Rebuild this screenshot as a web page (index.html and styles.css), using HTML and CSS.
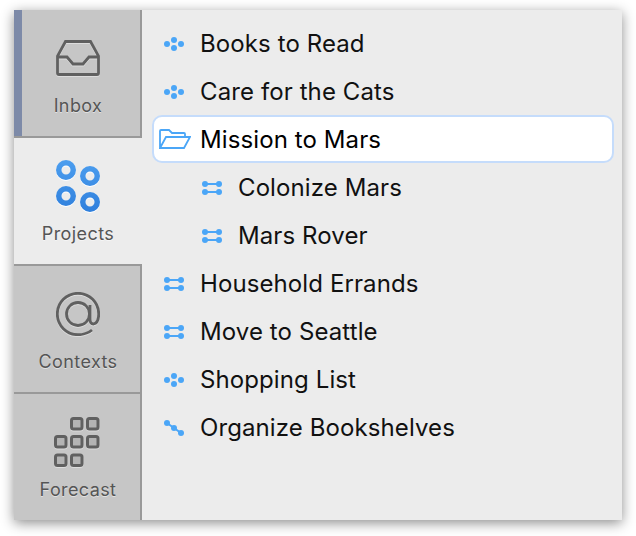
FILE: index.html
```html
<!DOCTYPE html>
<html lang="en">
<head>
    <meta charset="UTF-8">
    <title>Projects</title>
    <link rel="stylesheet" href="styles.css">
</head>
<body>
    <svg class="defs" width="0" height="0">
        <symbol id="parallel" viewBox="0 0 20 16">
            <path d="M3 4H17M3 12H17" stroke="#4ba6f7" stroke-width="2"/>
            <circle cx="3" cy="4" r="3"/><circle cx="17" cy="4" r="3"/>
            <circle cx="3" cy="12" r="3"/><circle cx="17" cy="12" r="3"/>
        </symbol>
        <symbol id="single" viewBox="0 0 20 16">
            <circle cx="3" cy="8" r="3"/><circle cx="10" cy="4" r="3"/>
            <circle cx="10" cy="12" r="3"/><circle cx="17" cy="8" r="3"/>
        </symbol>
        <symbol id="sequential" viewBox="0 0 20 16">
            <path d="M3 3L10 8L17 13" stroke="#4ba6f7" stroke-width="2" fill="none"/>
            <circle cx="3" cy="3" r="3"/><circle cx="10" cy="8" r="3"/><circle cx="17" cy="13" r="3"/>
        </symbol>
    </svg>

    <div class="window">
        <div class="sidebar">
            <div class="tab tab-first">
                <div class="icon-box">
                    <svg class="tab-icon" width="44" height="36" viewBox="0 0 44 36">
                        <path d="M9.5 1.5H34.5L42.5 16V33Q42.5 34.5 41 34.5H3Q1.5 34.5 1.5 33V16Z M1.5 17H11L17 24H27L33 17H42.5"/>
                    </svg>
                </div>
                <span class="tab-label">Inbox</span>
            </div>
            <div class="tab tab-active">
                <div class="icon-box">
                    <svg class="rings" width="48" height="52" viewBox="0 0 48 52">
                        <defs>
                            <linearGradient id="ring" gradientUnits="userSpaceOnUse" x1="0" y1="0" x2="0" y2="52">
                                <stop offset="0" stop-color="#4c9eef"/>
                                <stop offset="1" stop-color="#2f7fdc"/>
                            </linearGradient>
                        </defs>
                        <g fill="none" stroke="url(#ring)" stroke-width="5.5">
                            <circle cx="12" cy="10" r="7.25"/><circle cx="36" cy="16" r="7.25"/>
                            <circle cx="12" cy="36" r="7.25"/><circle cx="36" cy="42" r="7.25"/>
                        </g>
                    </svg>
                </div>
                <span class="tab-label">Projects</span>
            </div>
            <div class="tab">
                <div class="icon-box">
                    <svg class="tab-icon" width="44" height="44" viewBox="0 0 44 44">
                        <circle cx="22" cy="22" r="11.5"/>
                        <path d="M34 13V27Q34 32 37.5 32Q42.7 31 42.7 22A20.7 20.7 0 1 0 22 42.7Q30 42.7 36 38"/>
                    </svg>
                </div>
                <span class="tab-label">Contexts</span>
            </div>
            <div class="tab tab-last">
                <div class="icon-box">
                    <svg class="tab-icon tab-icon-grid" width="48" height="51" viewBox="0 0 48 51">
                        <rect x="17.5" y="1.5" width="10.5" height="10.5" rx="2"/><rect x="33.5" y="1.5" width="10.5" height="10.5" rx="2"/>
                        <rect x="1.5" y="19.5" width="10.5" height="10.5" rx="2"/><rect x="17.5" y="19.5" width="10.5" height="10.5" rx="2"/><rect x="33.5" y="19.5" width="10.5" height="10.5" rx="2"/>
                        <rect x="1.5" y="38" width="10.5" height="10.5" rx="2"/><rect x="17.5" y="38" width="10.5" height="10.5" rx="2"/>
                    </svg>
                </div>
                <span class="tab-label">Forecast</span>
            </div>
        </div>

        <ul class="list">
            <li class="row"><svg class="row-icon"><use href="#single"/></svg>Books to Read</li>
            <li class="row"><svg class="row-icon"><use href="#single"/></svg>Care for the Cats</li>
            <li class="row row-selected">
                <svg class="folder" width="32" height="20" viewBox="0 0 32 20">
                    <path d="M1 19V2Q1 1 2 1H10L13 4H25Q26 4 26 5V8M1 19L7 8H31L25 19Z"/>
                </svg>Mission to Mars
            </li>
            <li class="row row-child"><svg class="row-icon"><use href="#parallel"/></svg>Colonize Mars</li>
            <li class="row row-child"><svg class="row-icon"><use href="#parallel"/></svg>Mars Rover</li>
            <li class="row"><svg class="row-icon"><use href="#parallel"/></svg>Household Errands</li>
            <li class="row"><svg class="row-icon"><use href="#parallel"/></svg>Move to Seattle</li>
            <li class="row"><svg class="row-icon"><use href="#single"/></svg>Shopping List</li>
            <li class="row"><svg class="row-icon"><use href="#sequential"/></svg>Organize Bookshelves</li>
        </ul>
    </div>
</body>
</html>
```

FILE: styles.css
```css
body {
    margin: 0;
    padding: 10px 14px 16px;
    background-color: white;
    font-family: "Inter", "Open Sans", sans-serif;
}

.defs {
    position: absolute;
}

.window {
    display: flex;
    width: 608px;
    height: 510px;
    background-color: #ececec;
    box-shadow: 0 3px 12px rgba(0, 0, 0, 0.45);
}

.sidebar {
    display: flex;
    flex-direction: column;
    width: 128px;
    flex-shrink: 0;
}

.tab {
    flex: 1;
    display: flex;
    flex-direction: column;
    align-items: center;
    padding-top: 18px;
    padding-left: 2px;
    background-color: #c6c6c6;
    border-right: 2px solid #999;
    border-bottom: 2px solid #999;
}

.tab-first {
    box-shadow: inset 8px 0 0 #7d8aa8;
}

.tab-active {
    padding-left: 0;
    background-color: #ececec;
    border-right: none;
}

.tab-last {
    border-bottom: none;
}

.icon-box {
    display: flex;
    align-items: center;
    justify-content: center;
    height: 60px;
    margin-bottom: 8px;
}

.tab-icon {
    fill: none;
    stroke: #606060;
    stroke-width: 2.8;
    filter: drop-shadow(0 1px 0 rgba(255, 255, 255, 0.4));
}

.tab-icon-grid {
    fill: #b4b4b4;
    stroke-width: 3;
}

.rings {
    filter: drop-shadow(0 1px 0 white);
}

.tab-label {
    font-size: 18px;
    line-height: 20px;
    letter-spacing: 0.4px;
    color: #555;
    text-shadow: 0 1px 0 rgba(255, 255, 255, 0.5);
}

.list {
    flex: 1;
    margin: 0;
    padding: 9px 9px 0 11px;
    list-style-type: none;
}

.row {
    display: flex;
    align-items: center;
    height: 48px;
    padding-left: 11px;
    font-size: 24px;
    letter-spacing: 0.1px;
    color: #111;
}

.row-icon {
    width: 20px;
    height: 16px;
    margin-top: 2px;
    margin-right: 16px;
    fill: #4ba6f7;
}

.row-child {
    padding-left: 49px;
}

.row-selected {
    box-sizing: border-box;
    margin: 0 -1px;
    padding-left: 5px;
    background-color: white;
    border: 2px solid #c5dcfb;
    border-radius: 10px;
    color: black;
}

.folder {
    margin-right: 9px;
    fill: none;
    stroke: #4ba6f7;
    stroke-width: 1.8;
}
```
